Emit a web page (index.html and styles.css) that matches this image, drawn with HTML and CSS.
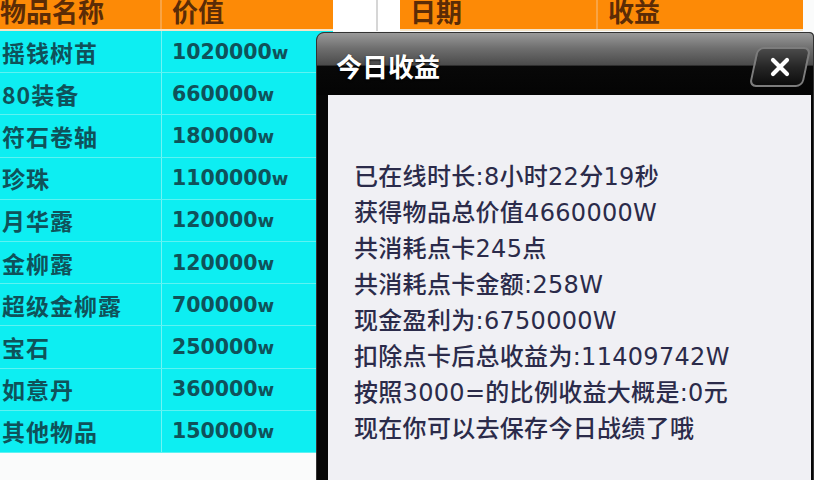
FILE: index.html
```html
<!DOCTYPE html>
<html lang="zh-CN">
<head>
<meta charset="utf-8">
<title>今日收益</title>
<link rel="stylesheet" href="styles.css">
</head>
<body>
	<div class="page">
		<div class="tbl tbl-items">
			<div class="head">
				<div class="c1">物品名称</div>
				<div class="c2">价值</div>
			</div>
			<div class="row"><div class="c1">摇钱树苗</div><div class="c2 num">1020000<span>w</span></div></div>
			<div class="row"><div class="c1">80装备</div><div class="c2 num">660000<span>w</span></div></div>
			<div class="row"><div class="c1">符石卷轴</div><div class="c2 num">180000<span>w</span></div></div>
			<div class="row"><div class="c1">珍珠</div><div class="c2 num">1100000<span>w</span></div></div>
			<div class="row"><div class="c1">月华露</div><div class="c2 num">120000<span>w</span></div></div>
			<div class="row"><div class="c1">金柳露</div><div class="c2 num">120000<span>w</span></div></div>
			<div class="row"><div class="c1">超级金柳露</div><div class="c2 num">700000<span>w</span></div></div>
			<div class="row"><div class="c1">宝石</div><div class="c2 num">250000<span>w</span></div></div>
			<div class="row"><div class="c1">如意丹</div><div class="c2 num">360000<span>w</span></div></div>
			<div class="row"><div class="c1">其他物品</div><div class="c2 num">150000<span>w</span></div></div>
		</div>
		<div class="split"><div class="split-line"></div></div>
		<div class="tbl tbl-days">
			<div class="head">
				<div class="c1">日期</div>
				<div class="c2">收益</div>
			</div>
		</div>
	</div>

	<div class="dlg">
		<div class="dlg-title">
			<span>今日收益</span>
			<div class="dlg-close">
				<svg width="22" height="22" viewBox="0 0 22 22">
					<path d="M4 4 L18 18 M18 4 L4 18" stroke="#fff" stroke-width="4.2" stroke-linecap="round"/>
				</svg>
			</div>
		</div>
		<div class="dlg-body">
			<p>已在线时长:8小时22分19秒</p>
			<p>获得物品总价值4660000W</p>
			<p>共消耗点卡245点</p>
			<p>共消耗点卡金额:258W</p>
			<p>现金盈利为:6750000W</p>
			<p>扣除点卡后总收益为:11409742W</p>
			<p>按照3000=的比例收益大概是:0元</p>
			<p>现在你可以去保存今日战绩了哦</p>
		</div>
	</div>
</body>
</html>
```

FILE: styles.css
```css
* {
	box-sizing: border-box;
}

html, body {
	margin: 0;
	padding: 0;
	width: 814px;
	height: 480px;
	overflow: hidden;
	background: #fafbfb;
	font-family: "DejaVu Sans", "Noto Sans CJK SC", sans-serif;
}

body {
	position: relative;
}

.page {
	display: flex;
	align-items: flex-start;
}

/* tables */
.tbl-items {
	width: 333px;
}
.tbl-days {
	width: 403px;
}
.head {
	display: flex;
	height: 31px;
	background: #fd8a06;
	color: #5b2c06;
	font-family: "Noto Sans CJK SC", sans-serif;
	font-weight: 700;
	font-size: 26px;
	line-height: 22px;
	overflow: hidden;
	border-bottom: 2px solid #f5e4c8;
}
.head .c1 {
	width: 162px;
	border-right: 2px solid #f9a444;
}
.head .c2 {
	flex: 1;
	padding-left: 10px;
}
.tbl-days .head .c1 {
	width: 198px;
	padding-left: 10px;
}

.row {
	display: flex;
	height: 42.2px;
	background: #0deef2;
	color: #0f525a;
	border-bottom: 1px solid #5ef2f2;
	align-items: center;
}
.row .c1 {
	width: 162px;
	height: 100%;
	display: flex;
	align-items: center;
	padding-left: 2px;
	border-right: 1px solid #6ff4f4;
	font-family: "Noto Sans CJK SC", sans-serif;
	font-weight: 700;
	font-size: 23px;
	letter-spacing: 1px;
}
.row .c2 {
	flex: 1;
	padding-left: 10px;
}
.num {
	font-size: 20.5px;
	font-weight: 700;
}
.num span {
	font-size: 18px;
}

.split {
	width: 67px;
	height: 31px;
	padding-left: 43px;
	background: #fff;
}
.split-line {
	width: 2px;
	height: 100%;
	background: #d6d6d6;
}

/* dialog */
.dlg {
	position: absolute;
	left: 316px;
	top: 32px;
	right: 0;
	bottom: -20px;
	background: #060606;
	border-radius: 8px 4px 0 0;
	border: 1px solid #333;
	padding: 0 2px 0 11px;
	display: flex;
	flex-direction: column;
}
.dlg-title {
	height: 62px;
	margin-left: -11px;
	margin-right: -2px;
	padding: 0 0 0 19px;
	border-radius: 7px 4px 0 0;
	background: linear-gradient(to bottom, #9a9a9a 0%, #6e6e6e 25%, #4a4a4a 52%, #080808 53%, #040404 100%);
	display: flex;
	align-items: center;
	justify-content: space-between;
	color: #fff;
	font-family: "Noto Sans CJK SC", sans-serif;
	font-weight: 700;
	font-size: 26px;
	text-shadow: 0 1px 2px #000;
}
.dlg-title span {
	margin-top: 2px;
}
.dlg-close {
	width: 54px;
	height: 40px;
	margin-right: 6px;
	margin-top: 6px;
	transform: skewX(-12deg);
	border: 2px solid #7c7c7c;
	border-radius: 7px;
	background: linear-gradient(to bottom, #4a4a4a 0%, #262626 50%, #0c0c0c 100%);
	display: flex;
	align-items: center;
	justify-content: center;
}
.dlg-close svg {
	transform: skewX(12deg);
}
.dlg-body {
	flex: 1;
	background: #f0f0f4;
	padding: 64px 0 0 26px;
	color: #2b2b4a;
	font-size: 24px;
	font-weight: 500;
	letter-spacing: 0.3px;
}
.dlg-body p {
	margin: 0;
	height: 36px;
	line-height: 36px;
	white-space: nowrap;
}
```
